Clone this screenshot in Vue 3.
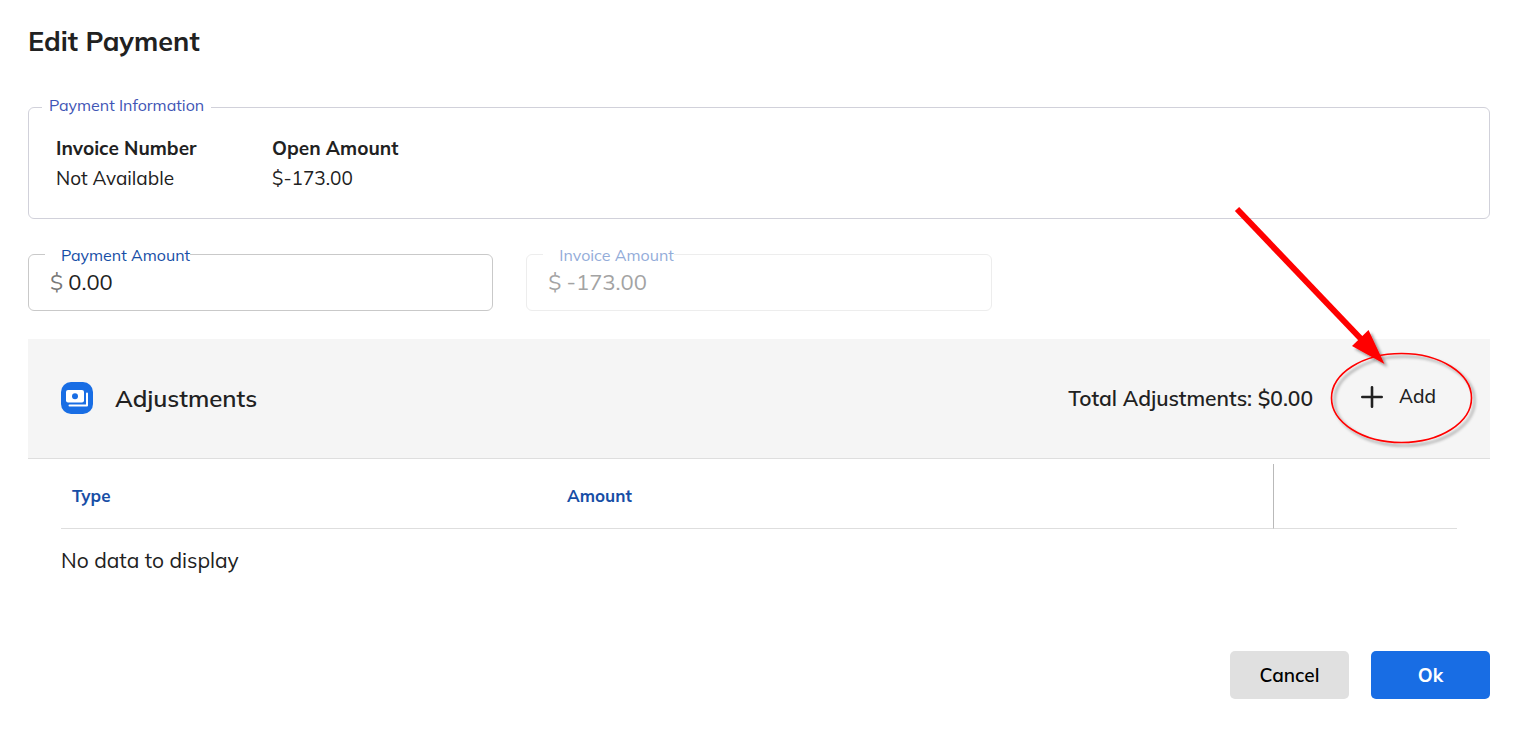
<script setup>
import { ref } from 'vue'

const paymentAmount = ref('0.00')
const invoiceAmount = ref('-173.00')
const info = [
  { label: 'Invoice Number', value: 'Not Available' },
  { label: 'Open Amount', value: '$-173.00' },
]
</script>

<template>
  <main class="page">
    <h1 class="title">Edit Payment</h1>

    <fieldset class="info">
      <legend>Payment Information</legend>
      <dl class="info-list">
        <div v-for="item in info" :key="item.label" class="info-item">
          <dt>{{ item.label }}</dt>
          <dd>{{ item.value }}</dd>
        </div>
      </dl>
    </fieldset>

    <div class="fields">
      <div class="field">
        <label for="payment-amount">Payment Amount</label>
        <span class="prefix">$</span>
        <input id="payment-amount" v-model="paymentAmount" type="text" />
      </div>
      <div class="field disabled">
        <label for="invoice-amount">Invoice Amount</label>
        <span class="prefix">$</span>
        <input id="invoice-amount" v-model="invoiceAmount" type="text" disabled />
      </div>
    </div>

    <section class="adjustments">
      <header class="bar">
        <svg class="badge" viewBox="0 0 32 32" aria-hidden="true">
          <rect width="32" height="32" rx="10" fill="#186de4" />
          <rect x="5" y="8" width="18" height="12.500" rx="2" fill="#fff" />
          <circle cx="14" cy="14.300" r="3" fill="#186de4" />
          <path d="M8.500 23.500H26V11.500" fill="none" stroke="#fff" stroke-width="2" stroke-linecap="round" stroke-linejoin="round" />
        </svg>
        <h2>Adjustments</h2>
        <span class="total">Total Adjustments: $0.00</span>
        <button type="button" class="add">
          <svg viewBox="0 0 22 22" aria-hidden="true">
            <path d="M11 1.300V20.700M1.300 11H20.700" stroke="#212121" stroke-width="2.6" stroke-linecap="round" />
          </svg>
          <span>Add</span>
        </button>
        <svg class="callout" viewBox="0 0 260 260" aria-hidden="true">
          <defs>
            <filter id="callout-shadow" x="-10%" y="-10%" width="125%" height="125%">
              <feDropShadow dx="3" dy="3" stdDeviation="1.5" flood-color="#000" flood-opacity="0.4" />
            </filter>
          </defs>
          <g filter="url(#callout-shadow)">
            <ellipse cx="171.500" cy="198" rx="70" ry="44.500" fill="none" stroke="#f00" stroke-width="1.6" />
            <path d="M154.500 164L138.500 130L122 146Z" fill="#f00" />
          </g>
          <path d="M7 9L133 141" stroke="#f00" stroke-width="6" />
        </svg>
      </header>

      <div class="table-wrap">
        <table>
          <colgroup>
            <col class="col-type" />
            <col />
            <col class="col-actions" />
          </colgroup>
          <thead>
            <tr>
              <th scope="col">Type</th>
              <th scope="col">Amount</th>
              <td class="actions"></td>
            </tr>
          </thead>
          <tbody>
            <tr>
              <td colspan="3" class="empty">No data to display</td>
            </tr>
          </tbody>
        </table>
      </div>
    </section>

    <footer class="footer">
      <button type="button" class="btn cancel">Cancel</button>
      <button type="button" class="btn ok">Ok</button>
    </footer>
  </main>
</template>

<style>
body {
  background: #fff;
}
</style>

<style scoped>
.page {
  box-sizing: border-box;
  padding: 21px 28px 38px;
  color: #212121;
  font-family: Mulish, "Open Sans", "Noto Sans", sans-serif;
  font-size: 19px;
}

button,
input {
  font-family: inherit;
}

.title {
  margin: 0 0 36px;
  font-size: 27px;
  line-height: 40px;
  font-weight: 700;
}

.info {
  min-width: 0;
  margin: 0;
  padding: 16px 27px 25px;
  border: 1px solid #d1d1da;
  border-radius: 6px;
}

.info legend {
  height: 20px;
  margin-left: -14px;
  padding: 0 7px;
  color: #3f55b5;
  font-size: 16px;
  line-height: 16px;
}

.info-list {
  display: flex;
  margin: 0;
}

.info-item {
  min-width: 216px;
  line-height: 30px;
}

.info-item dt {
  font-weight: 700;
}

.info-item dd {
  margin: 0;
}

.fields {
  display: grid;
  grid-template-columns: repeat(3, 1fr);
  gap: 33px;
  margin-top: 35px;
}

.field {
  position: relative;
  display: flex;
  align-items: center;
  box-sizing: border-box;
  height: 57px;
  padding: 0 21px 2px;
  border: 1px solid #c9c9c9;
  border-radius: 6px;
  font-size: 22px;
}

.field label {
  position: absolute;
  top: -11px;
  left: 16px;
  padding-left: 16px;
  background: #fff;
  color: #174ea6;
  font-size: 16px;
  line-height: 22px;
}

.prefix {
  color: #777;
}

.field input {
  flex: 1;
  min-width: 0;
  height: 40px;
  padding: 0 0 0 5px;
  border: 0;
  outline: 0;
  background: transparent;
  color: #212121;
  font-size: 22px;
}

.field.disabled {
  border-color: #ededed;
}

.disabled label {
  color: #93acd9;
}

.disabled .prefix,
.disabled input {
  color: #a3a3a3;
}

.adjustments {
  margin-top: 28px;
}

.bar {
  position: relative;
  display: flex;
  align-items: center;
  box-sizing: border-box;
  height: 120px;
  padding: 0 54px 2px 33px;
  border-bottom: 1px solid #dedede;
  background: #f5f5f5;
}

.badge {
  width: 32px;
  height: 32px;
}

.bar h2 {
  margin: 0 auto 0 22px;
  font-size: 24px;
  font-weight: 600;
}

.total {
  font-size: 21px;
  font-weight: 600;
}

.add {
  display: flex;
  align-items: center;
  gap: 16px;
  margin-left: 48px;
  padding: 0 0 2px;
  border: 0;
  background: none;
  color: #212121;
  font-size: 19px;
  font-weight: 500;
}

.add span {
  padding-bottom: 2px;
}

.add svg {
  width: 22px;
  height: 22px;
}

.callout {
  position: absolute;
  right: 0;
  bottom: -2px;
  width: 260px;
  height: 260px;
  pointer-events: none;
}

.table-wrap {
  padding: 5px 33px 0;
}

table {
  width: 100%;
  table-layout: fixed;
  border-collapse: separate;
  border-spacing: 0;
}

.col-type {
  width: 495px;
}

.col-actions {
  width: 184px;
}

th,
.actions {
  box-sizing: border-box;
  height: 65px;
  padding: 0 11px 2px;
  border-bottom: 1px solid #dedede;
  color: #174ea6;
  font-size: 17px;
  font-weight: 700;
  text-align: left;
}

.actions {
  border-left: 1px solid #b9b9b9;
}

.empty {
  height: 62px;
  padding: 0 0 2px;
  font-size: 21px;
}

.footer {
  display: flex;
  justify-content: flex-end;
  gap: 22px;
  margin-top: 58px;
}

.btn {
  min-width: 119px;
  height: 48px;
  border: 0;
  border-radius: 5px;
  font-size: 19px;
  font-weight: 600;
}

.cancel {
  background: #e0e0e0;
  color: #000;
}

.ok {
  background: #186de4;
  color: #fff;
  font-weight: 700;
}
</style>
